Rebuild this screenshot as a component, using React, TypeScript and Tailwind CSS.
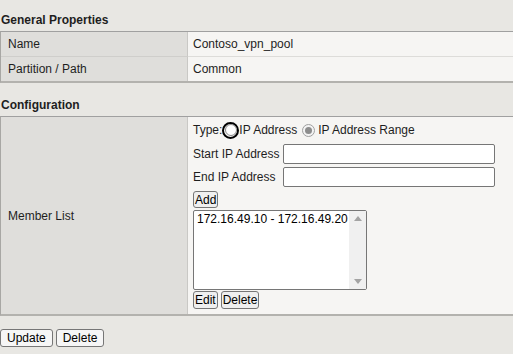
import React from 'react';

const labelCell = 'bg-[#dfdedb] border-r border-[#c9c8c5] pl-[7px] flex items-center';
const valueCell = 'bg-[#f6f5f3] pl-[5px] flex items-center';

function Btn({ children, tight }: { children: React.ReactNode; tight?: boolean }) {
  return (
    <button
      className={
        'h-[18px] leading-[14px] border border-[#767676] rounded-[3px] text-[12px] text-black ' +
        (tight ? 'px-[1px] bg-[#efefef]' : 'px-[6px] bg-[#f6f6f6]')
      }
    >
      {children}
    </button>
  );
}

function Radio({ checked, focused }: { checked?: boolean; focused?: boolean }) {
  if (focused) {
    return (
      <span className="w-[17px] h-[17px] rounded-full border-2 border-black flex items-center justify-center shrink-0">
        <span className="w-[12px] h-[12px] rounded-full border border-[#8a8a8a] bg-white" />
      </span>
    );
  }
  return (
    <span className="w-[13px] h-[13px] rounded-full border border-[#a0a0a0] bg-[#f3f3f3] flex items-center justify-center shrink-0">
      {checked && <span className="w-[7px] h-[7px] rounded-full bg-[#8d8d8d]" />}
    </span>
  );
}

export default function App() {
  return (
    <div
      className="w-[513px] h-[354px] bg-[#e8e7e3] text-[12px] text-[#1e1e1e] overflow-hidden"
      style={{ fontFamily: '"Liberation Sans", Arial, sans-serif' }}
    >
      <div className="pt-[13px] pl-[1px] font-bold leading-[14px]">General Properties</div>

      <div className="mt-[4px] grid grid-cols-[187px_1fr] border-t border-[#a0a0a0] border-b-2 border-b-[#b3b2ae] border-l border-l-[#a8a7a4]">
        <div className={labelCell + ' h-[25px] border-b border-b-[#cfcecb]'}>Name</div>
        <div className={valueCell + ' h-[25px] border-b border-b-[#dddcd9]'}>Contoso_vpn_pool</div>
        <div className={labelCell + ' h-[24px]'}>Partition / Path</div>
        <div className={valueCell + ' h-[24px]'}>Common</div>
      </div>

      <div className="mt-[15px] pl-[1px] font-bold leading-[14px]">Configuration</div>

      <div className="mt-[4px] grid grid-cols-[187px_1fr] border-t border-[#a0a0a0] border-b-2 border-b-[#b3b2ae] border-l border-l-[#a8a7a4]">
        <div className={labelCell}>Member List</div>
        <div className="bg-[#f6f5f3] pl-[5px] pt-[3px] pb-[5px] flex flex-col items-start">
          <div className="h-[20px] flex items-center">
            <span>Type:</span>
            <Radio focused />
            <span>IP Address</span>
            <span className="ml-[5px]"><Radio checked /></span>
            <span className="ml-[3px]">IP Address Range</span>
          </div>
          <div className="mt-[4px] h-[20px] flex items-center">
            <span className="w-[90px]">Start IP Address</span>
            <input className="w-[212px] h-[20px] border border-[#767676] rounded-[2px] bg-white outline-none" />
          </div>
          <div className="mt-[3px] h-[20px] flex items-center">
            <span className="w-[90px]">End IP Address</span>
            <input className="w-[212px] h-[20px] border border-[#767676] rounded-[2px] bg-white outline-none" />
          </div>
          <div className="mt-[4px] h-[17px] flex">
            <button className="h-[17px] leading-[14px] border border-[#767676] rounded-[3px] bg-[#efefef] px-[1px] text-[12px] text-black">
              Add
            </button>
          </div>
          <div className="mt-[2px] w-[174px] h-[80px] border border-[#767676] rounded-[2px] bg-white flex">
            <div className="flex-1 pl-[3px] pt-[1px] leading-[14px] text-black">172.16.49.10 - 172.16.49.20</div>
            <div className="w-[17px] bg-[#f0f0f0] flex flex-col items-center justify-between py-[5px]">
              <svg width="8" height="5" viewBox="0 0 8 5"><path d="M4 0 L8 5 L0 5 Z" fill="#a3a3a3" /></svg>
              <svg width="8" height="5" viewBox="0 0 8 5"><path d="M0 0 L8 0 L4 5 Z" fill="#a3a3a3" /></svg>
            </div>
          </div>
          <div className="mt-[1px] flex gap-[3px]">
            <Btn tight>Edit</Btn>
            <Btn tight>Delete</Btn>
          </div>
        </div>
      </div>

      <div className="mt-[13px] flex gap-[3px]">
        <Btn>Update</Btn>
        <Btn>Delete</Btn>
      </div>
    </div>
  );
}
